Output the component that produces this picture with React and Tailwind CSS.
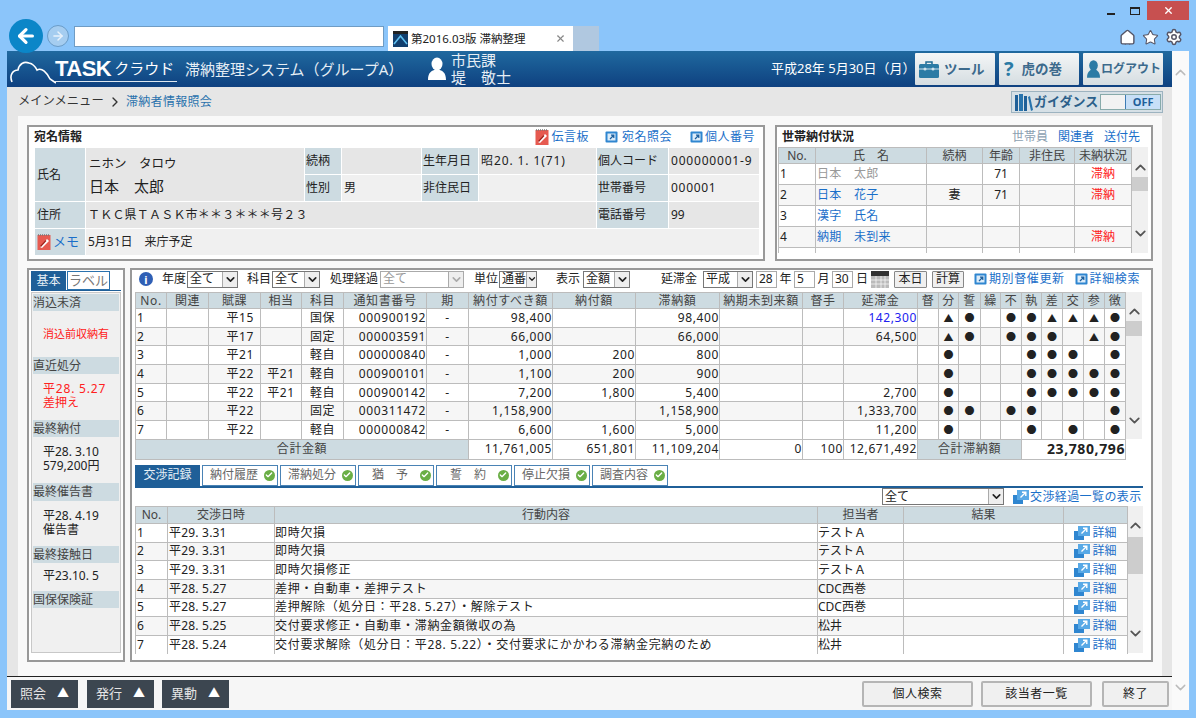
import React from "react";
import { ArrowLeft, ArrowRight, ChevronDown, ChevronUp, House, Star, Settings, X, Check } from "lucide-react";

const mainRows = [
	["1", "", "平15", "", "国保", "000900192", "-", "98,400", "", "98,400", "", "", "142,300", ["", "▲", "●", "", "●", "●", "▲", "▲", "▲", "●"]],
	["2", "", "平17", "", "固定", "000003591", "-", "66,000", "", "66,000", "", "", "64,500", ["", "▲", "●", "", "●", "●", "●", "", "▲", "●"]],
	["3", "", "平21", "", "軽自", "000000840", "-", "1,000", "200", "800", "", "", "", ["", "●", "", "", "", "●", "●", "●", "", "●"]],
	["4", "", "平22", "平21", "軽自", "000900101", "-", "1,100", "200", "900", "", "", "", ["", "●", "", "", "", "●", "●", "●", "●", "●"]],
	["5", "", "平22", "平21", "軽自", "000900142", "-", "7,200", "1,800", "5,400", "", "", "2,700", ["", "●", "", "", "", "●", "●", "●", "●", "●"]],
	["6", "", "平22", "", "固定", "000311472", "-", "1,158,900", "", "1,158,900", "", "", "1,333,700", ["", "●", "●", "", "●", "●", "", "", "", "●"]],
	["7", "", "平22", "", "軽自", "000000842", "-", "6,600", "1,600", "5,000", "", "", "11,200", ["", "●", "", "", "", "●", "", "●", "", "●"]],
];

const mainHeads = ["No.", "関連", "賦課", "相当", "科目", "通知書番号", "期", "納付すべき額", "納付額", "滞納額", "納期未到来額", "督手", "延滞金", "督", "分", "誓", "繰", "不", "執", "差", "交", "参", "徴"];

const logRows = [
	["1", "平29. 3.31", "即時欠損", "テストＡ"],
	["2", "平29. 3.31", "即時欠損", "テストＡ"],
	["3", "平29. 3.31", "即時欠損修正", "テストＡ"],
	["4", "平28. 5.27", "差押・自動車・差押テスト", "CDC西巻"],
	["5", "平28. 5.27", "差押解除（処分日：平28. 5.27）・解除テスト", "CDC西巻"],
	["6", "平28. 5.25", "交付要求修正・自動車・滞納金額徴収の為", "松井"],
	["7", "平28. 5.24", "交付要求解除（処分日：平28. 5.22）・交付要求にかかわる滞納金完納のため", "松井"],
];

const householdRows = [
	["1", "日本　太郎", "", "71", "", "滞納", "text-[#999]"],
	["2", "日本　花子", "妻", "71", "", "滞納", "text-[#1a6fc9]"],
	["3", "漢字　氏名", "", "", "", "", "text-[#1a6fc9]"],
	["4", "納期　未到来", "", "", "", "滞納", "text-[#1a6fc9]"],
];

const tabs = [["納付履歴"], ["滞納処分"], ["猶　予"], ["誓　約"], ["停止欠損"], ["調査内容"]];

const BoxLink = ({ className = "" }) => (
	<svg width="13" height="12" viewBox="0 0 13 12" className={className}>
		<rect x="0.5" y="0.5" width="12" height="11" rx="1" fill="#2f86d0" />
		<rect x="2.5" y="2.5" width="8" height="7" fill="#dcecf9" />
		<path d="M5 8 L8.5 4.5 M6 4.2 H8.8 V7" stroke="#1b5f9e" strokeWidth="1.2" fill="none" />
	</svg>
);

const DetailIcon = ({ className = "" }) => (
	<svg width="16" height="14" viewBox="0 0 16 14" className={className}>
		<rect x="0" y="5" width="10" height="9" fill="#2f86d0" />
		<rect x="4" y="0" width="12" height="10" fill="#58a9e6" />
		<path d="M7.5 7.5 L12.5 2.5 M9 2.3 H12.8 V6" stroke="#fff" strokeWidth="1.4" fill="none" />
	</svg>
);

const MemoIcon = () => (
	<svg width="14" height="16" viewBox="0 0 14 16">
		<rect x="0.5" y="1" width="13" height="15" fill="#e65a50" />
		<path d="M1 1 H13" stroke="#777" strokeWidth="1.6" strokeDasharray="1 1" />
		<path d="M3 13 L10 5 L12 7 L5 14 Z" fill="#fff" />
		<path d="M3.5 12.5 L9 6.5" stroke="#9e1f18" strokeWidth="1.2" />
	</svg>
);

const CheckDot = () => (
	<span className="flex h-[11px] w-[11px] shrink-0 items-center justify-center rounded-full bg-[#6aae45]">
		<Check size={8} strokeWidth={4} className="text-white" />
	</span>
);

const Scroll = ({ className, thumb, upOffset }) => (
	<div className={`flex flex-col items-center bg-[#f0f0f0] ${className}`}>
		<ChevronUp size={17} strokeWidth={2.5} className={`shrink-0 text-[#555] ${upOffset}`} />
		<div className={`w-full shrink-0 bg-[#cdcdcd] ${thumb}`} />
		<div className="flex-1" />
		<ChevronDown size={17} strokeWidth={2.5} className="shrink-0 text-[#555]" />
	</div>
);

const Sel = ({ className, text, disabled, narrow }) => (
	<div className={`flex h-[17px] items-center justify-between overflow-hidden border border-[#777] bg-white pl-[2px] ${disabled ? "border-[#aaa] text-[#999]" : ""} ${className}`}>
		<span className="whitespace-nowrap">{text}</span>
		<span className={`flex h-full shrink-0 items-center justify-center border-l border-[#aaa] bg-[#eee] ${narrow ? "w-[11px]" : "w-[15px]"} ${disabled ? "text-[#aaa]" : "text-[#222]"}`}>
			<ChevronDown size={narrow ? 10 : 13} strokeWidth={3} />
		</span>
	</div>
);

const Box = ({ className, text }) => (
	<div className={`flex h-[17px] items-center border border-[#aaa] bg-white pl-[2px] ${className}`}>{text}</div>
);

const SideHead = ({ text, className = "" }) => (
	<div className={`flex h-[17px] items-center bg-[#cddbe1] text-[#444] ${className}`}>{text}</div>
);

const Btn = ({ className, children }) => (
	<button className={`flex h-[32px] items-center whitespace-nowrap rounded-[1px] bg-gradient-to-b from-[#f4f6f7] to-[#d5dde1] text-[13.5px] font-bold text-[#3c6a8c] ${className}`}>
		{children}
	</button>
);

const App = () => {
	return (
		<div className="flex h-[718px] w-[1196px] flex-col overflow-hidden bg-[#8bc5fa] font-['Noto_Sans','Noto_Sans_CJK_JP',sans-serif] text-[12px] text-[#222]">
			{/* window title */}
			<div className="flex h-[26px] shrink-0 items-start justify-end pr-[7px] pt-[1px]">
				<div className="mr-[15px] mt-[12px] h-[2px] w-[8px] bg-[#222]" />
				<div className="mr-[7px] mt-[6px] h-[8px] w-[10px] border border-t-2 border-[#222]" />
				<div className="flex h-[19px] w-[42px] items-center justify-center bg-[#c75050]">
					<X size={11} strokeWidth={3} className="text-white" />
				</div>
			</div>

			{/* browser bar */}
			<div className="flex h-[25px] shrink-0 items-start pl-[9px]">
				<div className="relative z-10 -mt-[7px] flex h-[34px] w-[34px] shrink-0 items-center justify-center rounded-full bg-[#0b86c8]">
					<ArrowLeft size={22} strokeWidth={3.5} className="text-white" />
				</div>
				<div className="ml-[4px] -mt-[1px] flex h-[22px] w-[22px] shrink-0 items-center justify-center rounded-full border border-[#6a9cc8] bg-[#a5cdf0]">
					<ArrowRight size={14} strokeWidth={2.5} className="text-[#e8f2fb]" />
				</div>
				<div className="ml-[5px] h-[21px] w-[310px] shrink-0 border border-[#6f9cc4] bg-white" />
				<div className="ml-[4px] flex h-[25px] w-[185px] shrink-0 items-center bg-white pl-[5px] pr-[7px]">
					<svg width="15" height="16" viewBox="0 0 15 16" className="shrink-0">
						<rect width="15" height="16" fill="#123f6e" />
						<rect x="0" y="0" width="15" height="3" fill="#222" />
						<path d="M1 13 L7.5 5 L14 13" fill="none" stroke="#5fc0f0" strokeWidth="1.6" />
					</svg>
					<span className="ml-[3px] whitespace-nowrap text-[11.5px]">第2016.03版 滞納整理</span>
					<X size={11} strokeWidth={2.5} className="ml-auto text-[#888]" />
				</div>
				<div className="h-[25px] w-[26px] shrink-0 bg-[#b0c8e0]" />
				<div className="ml-auto mr-[13px] mt-[2px] flex items-center gap-[6px]">
					<House size={17} strokeWidth={2} fill="#fff" className="text-[#556]" />
					<Star size={17} strokeWidth={1.5} fill="#fff" className="text-[#556]" />
					<Settings size={18} strokeWidth={2} fill="#fff" className="text-[#556]" />
				</div>
			</div>

			<div className="flex h-[659px] shrink-0 pl-[7px]">
				<div className="flex w-[1165px] shrink-0 flex-col">
					{/* app header */}
					<div className="flex h-[36px] shrink-0 items-center bg-gradient-to-b from-[#20699f] to-[#0f4180] pl-[3px] text-white">
						<svg width="46" height="30" viewBox="0 0 46 30" className="mt-[1px] shrink-0">
							<path d="M2 27 C-1 20 3 15 8 15 C9 9 14 6 19 8 C24 9 26 13 27 15 C32 12 37 18 40 24 L46 28" fill="none" stroke="#fff" strokeWidth="1.6" />
						</svg>
						<div className="-ml-[1px] flex h-[26px] w-[122px] shrink-0 items-center border-b border-[#dfe8f0]">
							<span className="font-['Liberation_Sans',sans-serif] text-[22px] font-bold leading-none tracking-[-0.5px]">TASK</span>
							<span className="ml-[3px] text-[15px] leading-none">クラウド</span>
						</div>
						<span className="ml-[8px] w-[243px] shrink-0 whitespace-nowrap text-[15px] text-[#e6eef5]">滞納整理システム（グループA）</span>
						<svg width="18" height="24" viewBox="0 0 18 24" className="shrink-0">
							<ellipse cx="9" cy="7" rx="5.5" ry="6.5" fill="#fff" />
							<path d="M0 23 C0 15 4 14 6 13 H12 C14 14 18 15 18 23 Z" fill="#fff" />
						</svg>
						<div className="ml-[5px] w-[60px] shrink-0 whitespace-nowrap text-[15px] leading-[17px] text-[#e6eef5]">
							<div>市民課</div>
							<div>堤　敬士</div>
						</div>
						<span className="ml-[260px] w-[144px] shrink-0 whitespace-nowrap text-[13px]">平成28年 5月30日（月）</span>
						<Btn className="w-[80px] shrink-0 pl-[4px]">
							<svg width="20" height="17" viewBox="0 0 20 17" className="mr-[5px]">
								<path d="M7 3 V1 H13 V3" fill="none" stroke="#1f6b94" strokeWidth="1.5" />
								<rect y="3" width="20" height="14" rx="1.5" fill="#2c7ba5" />
								<path d="M0 8 H20" stroke="#cfe2ec" />
								<circle cx="6" cy="8" r="1.5" fill="#cfe2ec" />
								<circle cx="14" cy="8" r="1.5" fill="#cfe2ec" />
							</svg>
							ツール
						</Btn>
						<Btn className="ml-[4px] w-[80px] shrink-0 pl-[5px]">
							<span className="mr-[8px] text-[20px] leading-none text-[#2c7ba5]">?</span>虎の巻
						</Btn>
						<Btn className="ml-[4px] w-[80px] shrink-0 pl-[4px]">
							<svg width="13" height="20" viewBox="0 0 15 20" className="mr-[1px] shrink-0">
								<ellipse cx="7.5" cy="6" rx="5" ry="6" fill="#2c7ba5" />
								<path d="M0 20 C0 14 3 12 5 11 H10 C12 12 15 14 15 20 Z" fill="#2c7ba5" />
							</svg>
							<span className="text-[12px]">ログアウト</span>
						</Btn>
					</div>

					{/* body */}
					<div className="flex min-h-0 flex-1 flex-col bg-[#e6e6e6]">
						<div className="flex h-[29px] shrink-0 items-center pl-[11px] pr-[9px]">
							<span className="w-[87px] whitespace-nowrap text-[12.3px] text-[#333]">メインメニュー</span>
							<ChevronDown size={16} strokeWidth={2} className="mx-[2px] -rotate-90 text-[#333]" />
							<span className="ml-[1px] text-[12px] tracking-[0.3px] text-[#2a72ad]">滞納者情報照会</span>
							<div className="ml-auto mt-[1px] flex h-[22px] w-[152px] items-center border border-[#9db3c0] bg-[#d6e0e6] pl-[3px]">
								<svg width="18" height="17" viewBox="0 0 18 17" className="shrink-0">
									<rect x="0" y="1" width="3" height="16" fill="#1f6098" />
									<rect x="4" y="0" width="4" height="17" fill="#2874ad" />
									<rect x="9" y="2" width="3" height="15" fill="#1f6098" />
									<path d="M13 3 L15 2 L18 16 L16 17 Z" fill="#2874ad" />
								</svg>
								<span className="ml-[1px] whitespace-nowrap text-[13px] font-bold text-[#2b5f8a]">ガイダンス</span>
								<div className="ml-[2px] flex h-[16px] w-[61px] shrink-0 border border-[#8aa] bg-white">
									<div className="w-[24px] bg-[#f2f2f2]" />
									<div className="flex flex-1 items-center justify-center border-l border-[#3d7cb5] bg-[#c7dff7] text-[11px] font-bold text-[#1f5f9a]">OFF</div>
								</div>
							</div>
						</div>

						<div className="ml-[11px] flex h-[560px] w-[1144px] shrink-0 flex-col bg-[#f9f9f9] pl-[9px] pr-[9px] pt-[9px]">
							{/* top cards */}
							<div className="flex h-[136px] shrink-0 gap-[10px]">
								<div className="w-[738px] shrink-0 border-2 border-[#999] bg-white px-[5px]">
									<div className="flex h-[20px] items-center">
										<span className="font-bold">宛名情報</span>
										<div className="ml-auto mr-[3px] flex items-center tracking-[0.5px] text-[#1a6fc9]">
											<MemoIcon />
											<span className="ml-[2px]">伝言板</span>
											<BoxLink className="ml-[16px]" />
											<span className="ml-[4px]">宛名照会</span>
											<BoxLink className="ml-[18px]" />
											<span className="ml-[2px]">個人番号</span>
										</div>
									</div>
									<table className="w-[725px] table-fixed border-collapse text-[12px]">
										<colgroup>
											<col className="w-[51px]" />
											<col className="w-[219px]" />
											<col className="w-[37px]" />
											<col className="w-[80px]" />
											<col className="w-[57px]" />
											<col className="w-[118px]" />
											<col className="w-[72px]" />
											<col className="w-[91px]" />
										</colgroup>
										<tbody>
											<tr className="h-[27px]">
												<td rowSpan={2} className="border border-white bg-[#cddbe1] pl-[2px]">氏名</td>
												<td rowSpan={2} className="border border-white bg-[#e6e6e6] pl-[3px]">
													<div className="text-[12.5px] leading-[24px]">ニホン　タロウ</div>
													<div className="text-[15px] leading-[21px]">日本　太郎</div>
												</td>
												<td className="border border-white bg-[#cddbe1] pl-[1px]">続柄</td>
												<td className="border border-white bg-[#e6e6e6]" />
												<td className="border border-white bg-[#cddbe1] pl-[1px]">生年月日</td>
												<td className="whitespace-nowrap border border-white bg-[#e6e6e6] pl-[2px] tracking-[0.9px]">昭20. 1. 1(71)</td>
												<td className="whitespace-nowrap border border-white bg-[#cddbe1] pl-[1px]">個人コード</td>
												<td className="whitespace-nowrap border border-white bg-[#e6e6e6] pl-[2px] tracking-[0.8px]">000000001-9</td>
											</tr>
											<tr className="h-[27px]">
												<td className="border border-white bg-[#cddbe1] pl-[1px]">性別</td>
												<td className="border border-white bg-[#f0f0f0] pl-[2px]">男</td>
												<td className="border border-white bg-[#cddbe1] pl-[1px]">非住民日</td>
												<td className="border border-white bg-[#f0f0f0]" />
												<td className="border border-white bg-[#cddbe1] pl-[1px]">世帯番号</td>
												<td className="border border-white bg-[#f0f0f0] pl-[2px] tracking-[0.7px]">000001</td>
											</tr>
											<tr className="h-[27px]">
												<td className="border border-white bg-[#cddbe1] pl-[2px]">住所</td>
												<td colSpan={5} className="border border-white bg-[#e6e6e6] pl-[2px] tracking-[0.2px]">ＴＫＣ県ＴＡＳＫ市＊＊３＊＊＊号２３</td>
												<td className="border border-white bg-[#cddbe1] pl-[1px]">電話番号</td>
												<td className="border border-white bg-[#e6e6e6] pl-[2px]">99</td>
											</tr>
											<tr className="h-[27px]">
												<td className="border border-white bg-[#cddbe1] pl-[2px]">
													<div className="flex items-center text-[#1a6fc9]">
														<MemoIcon />
														<span className="ml-[2px] text-[13px]">メモ</span>
													</div>
												</td>
												<td colSpan={7} className="border border-white bg-[#f0f0f0] pl-[2px]">5月31日　来庁予定</td>
											</tr>
										</tbody>
									</table>
								</div>

								<div className="w-[378px] shrink-0 border-2 border-[#999] bg-white pl-[1px]">
									<div className="flex h-[20px] items-center pl-[4px] pr-[11px]">
										<span className="font-bold">世帯納付状況</span>
										<div className="ml-auto flex gap-[10px] text-[#1a6fc9]">
											<span className="text-[#8ba0b0]">世帯員</span>
											<span>関連者</span>
											<span>送付先</span>
										</div>
									</div>
									<div className="flex">
										<table className="h-[106px] w-[353px] table-fixed border-collapse text-[12px]">
											<colgroup>
												<col className="w-[37px]" />
												<col className="w-[111px]" />
												<col className="w-[56px]" />
												<col className="w-[37px]" />
												<col className="w-[55px]" />
												<col className="w-[57px]" />
											</colgroup>
											<thead>
												<tr className="h-[16px]">
													{["No.", "氏　名", "続柄", "年齢", "非住民", "未納状況"].map((h) => (
														<th key={h} className="border border-[#bcbcbc] bg-[#cddbe1] p-0 font-normal leading-none text-[#444]">{h}</th>
													))}
												</tr>
											</thead>
											<tbody>
												{householdRows.map((r, i) => (
													<tr key={r[0]} className={`h-[21px] ${i % 2 ? "bg-[#f6f6f6]" : "bg-white"}`}>
														<td className="border border-[#bcbcbc] p-0 pl-[1px]">{r[0]}</td>
														<td className={`border border-[#bcbcbc] p-0 pl-[1px] tracking-[0.3px] ${r[6]}`}>{r[1]}</td>
														<td className="border border-[#bcbcbc] p-0 text-center">{r[2]}</td>
														<td className="border border-[#bcbcbc] p-0 text-center">{r[3]}</td>
														<td className="border border-[#bcbcbc] p-0" />
														<td className="border border-[#bcbcbc] p-0 text-center text-[#ff2020]">{r[5]}</td>
													</tr>
												))}
												<tr className="h-[5px]">
													<td className="border-x border-[#bcbcbc]" />
													<td className="border-x border-[#bcbcbc]" />
													<td className="border-x border-[#bcbcbc]" />
													<td className="border-x border-[#bcbcbc]" />
													<td className="border-x border-[#bcbcbc]" />
													<td className="border-x border-[#bcbcbc]" />
												</tr>
											</tbody>
										</table>
										<Scroll className="h-[106px] w-[16px] shrink-0 pb-[11px]" thumb="h-[14px] mt-[1px]" upOffset="mt-[12px]" />
									</div>
								</div>
							</div>

							{/* lower area */}
							<div className="mt-[7px] flex h-[394px] shrink-0 gap-[5px]">
								<div className="w-[98px] shrink-0 border-2 border-[#999] bg-white px-[2px] pt-[1px]">
									<div className="flex h-[19px] items-end">
										<div className="flex h-[19px] w-[35px] items-center justify-center bg-[#1f5f98] text-[#e8f0f6]">基本</div>
										<div className="ml-[1px] flex h-[19px] w-[43px] items-center justify-center border border-[#2a72ad] text-[13px] text-[#777]">ラベル</div>
									</div>
									<div className="h-[1px] bg-[#1f5f98]" />
									<div className="mt-[1px] flex h-[361px] flex-col border border-[#c8c8c8] bg-[#f0f0f0] px-[1px] pt-[1px]">
										<SideHead text="消込未済" />
										<div className="flex h-[46px] items-center whitespace-nowrap pl-[10px] text-[11px] text-[#ff2020]">消込前収納有</div>
										<SideHead text="直近処分" />
										<div className="h-[46px] pl-[10px] pt-[8px] leading-[14px] text-[#ff2020]">
											<div className="tracking-[0.8px]">平28. 5.27</div>
											<div>差押え</div>
										</div>
										<SideHead text="最終納付" />
										<div className="h-[46px] pl-[10px] pt-[8px] leading-[14px]">
											<div>平28. 3.10</div>
											<div>579,200円</div>
										</div>
										<SideHead text="最終催告書" className="h-[18px]" />
										<div className="h-[45px] pl-[10px] pt-[8px] leading-[14px]">
											<div>平28. 4.19</div>
											<div>催告書</div>
										</div>
										<SideHead text="最終接触日" />
										<div className="h-[28px] pl-[10px] pt-[6px] leading-[14px]">平23.10. 5</div>
										<SideHead text="国保保険証" />
									</div>
								</div>

								<div className="flex w-[1023px] shrink-0 flex-col border-2 border-[#999] bg-white pl-[3px]">
									{/* toolbar */}
									<div className="flex h-[22px] shrink-0 items-center whitespace-nowrap pb-[4px]">
										<div className="ml-[4px] flex h-[14px] w-[14px] shrink-0 items-center justify-center rounded-full bg-[#2f5fb5] text-[11px] font-bold leading-none text-white">i</div>
										<span className="ml-[9px] w-[25px]">年度</span>
										<Sel className="w-[51px]" text="全て" />
										<span className="ml-[9px] w-[25px]">科目</span>
										<Sel className="w-[48px]" text="全て" />
										<span className="ml-[10px] w-[50px]">処理経過</span>
										<Sel className="w-[84px]" text="全て" disabled />
										<span className="ml-[10px] w-[25px]">単位</span>
										<Sel className="w-[38px]" text="通番" narrow />
										<span className="ml-[19px] w-[27px]">表示</span>
										<Sel className="w-[47px]" text="金額" />
										<span className="ml-[31px] w-[42px]">延滞金</span>
										<Sel className="w-[50px]" text="平成" />
										<Box className="ml-[3px] w-[21px]" text="28" />
										<span className="w-[17px] text-center">年</span>
										<Box className="w-[21px]" text="5" />
										<span className="w-[17px] text-center">月</span>
										<Box className="w-[21px]" text="30" />
										<span className="w-[18px] text-center">日</span>
										<svg width="18" height="17" viewBox="0 0 18 17" className="shrink-0">
											<rect width="18" height="17" fill="#bbb" />
											<rect width="18" height="5" fill="#333" />
											<path d="M0 9 H18 M0 13 H18 M5 5 V17 M10 5 V17 M14 5 V17" stroke="#fff" strokeWidth="0.7" />
										</svg>
										<div className="ml-[5px] flex h-[17px] w-[33px] items-center justify-center rounded-[1px] border border-[#888] bg-[#f0f0f0]">本日</div>
										<div className="ml-[5px] flex h-[17px] w-[32px] items-center justify-center rounded-[1px] border border-[#888] bg-[#f0f0f0]">計算</div>
										<BoxLink className="ml-[10px] shrink-0" />
										<span className="ml-[2px] tracking-[0.6px] text-[#1a6fc9]">期別督催更新</span>
										<BoxLink className="ml-[10px] shrink-0" />
										<span className="ml-[2px] tracking-[0.6px] text-[#1a6fc9]">詳細検索</span>
									</div>

									{/* delinquency table */}
									<div className="flex shrink-0 items-start">
										<table className="w-[990px] shrink-0 table-fixed border-collapse text-[12px] tracking-[0.6px]">
											<colgroup>
												<col className="w-[31px]" />
												<col className="w-[42px]" />
												<col className="w-[52px]" />
												<col className="w-[41px]" />
												<col className="w-[42px]" />
												<col className="w-[83px]" />
												<col className="w-[42px]" />
												<col className="w-[84px]" />
												<col className="w-[83px]" />
												<col className="w-[84px]" />
												<col className="w-[83px]" />
												<col className="w-[41px]" />
												<col className="w-[74px]" />
												<col className="w-[21px]" />
												<col className="w-[20px]" />
												<col className="w-[22px]" />
												<col className="w-[20px]" />
												<col className="w-[21px]" />
												<col className="w-[20px]" />
												<col className="w-[21px]" />
												<col className="w-[21px]" />
												<col className="w-[21px]" />
												<col className="w-[21px]" />
											</colgroup>
											<thead>
												<tr className="h-[16px]">
													{mainHeads.map((h) => (
														<th key={h} className="overflow-hidden whitespace-nowrap border border-[#bcbcbc] bg-[#cddbe1] p-0 font-normal leading-none text-[#444]">{h}</th>
													))}
												</tr>
											</thead>
											<tbody>
												{mainRows.map((r, i) => (
													<tr key={r[0]} className={`h-[18.7px] leading-none ${i % 2 ? "bg-[#f6f6f6]" : "bg-white"}`}>
														<td className="border border-[#bcbcbc] p-0 pl-[1px]">{r[0]}</td>
														<td className="border border-[#bcbcbc] p-0" />
														<td className="border border-[#bcbcbc] p-0 pr-[6px] text-right">{r[2]}</td>
														<td className="border border-[#bcbcbc] p-0 text-center">{r[3]}</td>
														<td className="border border-[#bcbcbc] p-0 text-center">{r[4]}</td>
														<td className="border border-[#bcbcbc] p-0 text-right">{r[5]}</td>
														<td className="border border-[#bcbcbc] p-0 text-center">{r[6]}</td>
														<td className="border border-[#bcbcbc] p-0 text-right">{r[7]}</td>
														<td className="border border-[#bcbcbc] p-0 text-right">{r[8]}</td>
														<td className="border border-[#bcbcbc] p-0 text-right">{r[9]}</td>
														<td className="border border-[#bcbcbc] p-0" />
														<td className="border border-[#bcbcbc] p-0" />
														<td className={`border border-[#bcbcbc] p-0 text-right ${r[0] === "1" ? "text-[#2020f0]" : ""}`}>{r[12]}</td>
														{r[13].map((m, j) => (
															<td key={j} className="border border-[#bcbcbc] p-0 text-center text-[10px] tracking-normal">{m}</td>
														))}
													</tr>
												))}
												<tr className="h-[20px] leading-none">
													<td colSpan={7} className="border border-[#bcbcbc] bg-[#cddbe1] p-0 text-center text-[#444]">合計金額</td>
													<td className="border border-[#bcbcbc] p-0 text-right">11,761,005</td>
													<td className="border border-[#bcbcbc] p-0 text-right">651,801</td>
													<td className="border border-[#bcbcbc] p-0 text-right">11,109,204</td>
													<td className="border border-[#bcbcbc] p-0 text-right">0</td>
													<td className="border border-[#bcbcbc] p-0 text-right">100</td>
													<td className="border border-[#bcbcbc] p-0 text-right">12,671,492</td>
													<td colSpan={5} className="border border-[#bcbcbc] bg-[#cddbe1] p-0 text-center text-[#444]">合計滞納額</td>
													<td colSpan={5} className="border border-[#bcbcbc] p-0 text-right text-[14px] font-bold">23,780,796</td>
												</tr>
											</tbody>
										</table>
										<Scroll className="h-[147px] w-[16px] shrink-0 pb-[10px]" thumb="h-[15px] mt-[1px]" upOffset="mt-[11px]" />
									</div>

									{/* tabs */}
									<div className="mt-[5px] flex h-[23px] w-[1008px] shrink-0 gap-[2px] border-b-2 border-[#1f5f98]">
										<div className="flex h-[21px] w-[65px] items-center justify-center bg-[#1f5f98] text-[#e8f0f6]">交渉記録</div>
										{tabs.map((t) => (
											<div key={t[0]} className="flex h-[21px] w-[76px] items-center justify-center gap-[1px] border border-[#4a83b5] bg-white text-[#666]">
												<span className="w-[57px] whitespace-nowrap text-center">{t[0]}</span>
												<CheckDot />
											</div>
										))}
									</div>

									<div className="flex h-[18px] w-[1008px] shrink-0 items-center whitespace-nowrap pl-[747px]">
										<Sel className="w-[122px]" text="全て" />
										<DetailIcon className="ml-[9px] shrink-0" />
										<span className="ml-[1px] tracking-[0.4px] text-[#1a6fc9]">交渉経過一覧の表示</span>
									</div>

									{/* negotiation log */}
									<div className="flex shrink-0 items-start">
										<table className="w-[992px] shrink-0 table-fixed border-collapse text-[12px]">
											<colgroup>
												<col className="w-[32px]" />
												<col className="w-[107px]" />
												<col className="w-[543px]" />
												<col className="w-[86px]" />
												<col className="w-[160px]" />
												<col className="w-[64px]" />
											</colgroup>
											<thead>
												<tr className="h-[17px]">
													{["No.", "交渉日時", "行動内容", "担当者", "結果", ""].map((h) => (
														<th key={h} className="border border-[#bcbcbc] bg-[#cddbe1] p-0 font-normal leading-none text-[#444]">{h}</th>
													))}
												</tr>
											</thead>
											<tbody>
												{logRows.map((r, i) => (
													<tr key={r[0]} className={`h-[18.7px] leading-none [&:last-child>td]:border-b-0 ${i % 2 ? "bg-[#f6f6f6]" : "bg-white"}`}>
														<td className="border border-[#bcbcbc] p-0 pl-[1px]">{r[0]}</td>
														<td className="border border-[#bcbcbc] p-0 pl-[1px] tracking-[0.2px]">{r[1]}</td>
														<td className="overflow-hidden whitespace-nowrap border border-[#bcbcbc] p-0 tracking-[0.7px]">{r[2]}</td>
														<td className="border border-[#bcbcbc] p-0">{r[3]}</td>
														<td className="border border-[#bcbcbc] p-0" />
														<td className="border border-[#bcbcbc] p-0">
															<div className="flex items-center justify-center gap-[2px] text-[#1a6fc9]">
																<DetailIcon />
																<span>詳細</span>
															</div>
														</td>
													</tr>
												))}
											</tbody>
										</table>
										<Scroll className="h-[147px] w-[15px] shrink-0 pb-[11px]" thumb="h-[37px] mt-[3px]" upOffset="mt-[11px]" />
									</div>
								</div>
							</div>
						</div>

						{/* footer */}
						<div className="flex h-[34px] shrink-0 items-center border-t border-[#222] bg-[#f6f6f6] pl-[4px]">
							<button className="flex h-[28px] w-[67px] items-center justify-center gap-[11px] bg-[#3c4650] text-[13px] text-[#e5e5e5]">
								照会<span className="text-[12px] text-white">▲</span>
							</button>
							<button className="ml-[9px] flex h-[28px] w-[67px] items-center justify-center gap-[11px] bg-[#3c4650] text-[13px] text-[#e5e5e5]">
								発行<span className="text-[12px] text-white">▲</span>
							</button>
							<button className="ml-[8px] flex h-[28px] w-[67px] items-center justify-center gap-[11px] bg-[#3c4650] text-[13px] text-[#e5e5e5]">
								異動<span className="text-[12px] text-white">▲</span>
							</button>
							<button className="ml-[633px] flex h-[26px] w-[111px] items-center justify-center rounded-[2px] border-2 border-[#b5b5b5] bg-[#f0f0f0] tracking-[0.5px]">個人検索</button>
							<button className="ml-[8px] flex h-[26px] w-[111px] items-center justify-center rounded-[2px] border-2 border-[#b5b5b5] bg-[#f0f0f0] tracking-[0.5px]">該当者一覧</button>
							<button className="ml-[10px] flex h-[26px] w-[67px] items-center justify-center rounded-[2px] border-2 border-[#b5b5b5] bg-[#f0f0f0] tracking-[0.5px]">終了</button>
						</div>
					</div>
				</div>

				{/* page scrollbar */}
				<div className="flex w-[17px] shrink-0 flex-col items-center justify-between bg-[#fafafa] pb-[14px] pt-[13px]">
					<ChevronUp size={17} strokeWidth={2} className="text-[#bbb]" />
					<ChevronDown size={17} strokeWidth={2} className="text-[#bbb]" />
				</div>
			</div>
		</div>
	);
};

export default App;
